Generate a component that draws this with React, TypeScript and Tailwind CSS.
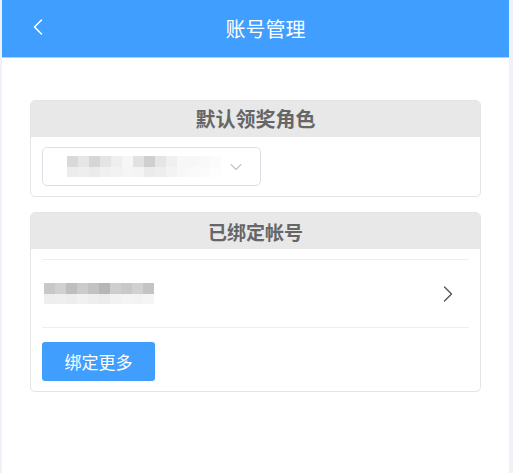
import { ChevronDown, ChevronLeft, ChevronRight } from 'lucide-react';

const FONT = { fontFamily: '"Noto Sans CJK SC", "Noto Sans", sans-serif' };

// blurred (pixelated) placeholder text, drawn as grey cells
const SELECT_TOP = ['#d9d9d9', '#e6e6e6', '#d6d6d6', '#e4e4e4', '#eeeeee', '#f6f6f6', '#e2e2e2', '#cfcfcf', '#e5e5e5', '#f0f0f0', '#f7f7f7', '#f7f7f7', '#f9f9f9', '#fbfbfb'];
const SELECT_BOTTOM = ['#ececec', '#eeeeee', '#ebebeb', '#f0f0f0', '#f2f2f2', '#f5f5f5', '#f4f4f4', '#ebebeb', '#eeeeee', '#f3f3f3', '#f8f8f8', '#fafafa', '#fbfbfb', '#fdfdfd'];
const ROW_TOP = ['#c8c8c8', '#d0d0d0', '#bebebe', '#cbcbcb', '#c2c2c2', '#b6b6b6', '#cecece', '#c8c8c8', '#d1d1d1', '#c4c4c4'];
const ROW_BOTTOM = ['#eeeeee', '#efefef', '#ededed', '#f1f1f1', '#eeeeee', '#ececec', '#f2f2f2', '#f4f4f4', '#f3f3f3', '#f5f5f5'];

function Blur({ top, bottom }: { top: string[]; bottom: string[] }) {
  return (
    <div className="flex flex-col">
      <div className="flex">
        {top.map((c, i) => (
          <div key={i} className="h-[11px] w-[11px]" style={{ backgroundColor: c }} />
        ))}
      </div>
      <div className="flex">
        {bottom.map((c, i) => (
          <div key={i} className="h-[10px] w-[11px]" style={{ backgroundColor: c }} />
        ))}
      </div>
    </div>
  );
}

function Card({ title, size, children }: { title: string; size: string; children: React.ReactNode }) {
  return (
    <div className="overflow-hidden rounded-[5px] border border-[#e4e4e4] bg-white">
      <div className={`flex h-[36px] items-center justify-center bg-[#e8e8e8] font-bold leading-none text-[#666666] ${size}`}>
        {title}
      </div>
      {children}
    </div>
  );
}

export default function App() {
  return (
    <div className="min-h-[473px] bg-[#edf2f9]" style={FONT}>
      <div className="ml-[2px] min-h-[473px] w-[507px] bg-white">
        {/* Header */}
        <div className="relative flex h-[58px] items-center justify-center border-b border-[#a6d2ff] bg-[#409eff]">
          <ChevronLeft className="absolute left-[22px] top-[13px] h-[28px] w-[28px] text-white" strokeWidth={1.3} />
          <span className="ml-[20px] text-[20px] text-white">账号管理</span>
        </div>

        <div className="flex flex-col gap-[15px] px-[28px] pt-[42px]">
          {/* Default reward role */}
          <Card title="默认领奖角色" size="text-[20px]">
            <div className="px-[11px] pb-[10px] pt-[10px]">
              <div className="flex h-[39px] w-[219px] items-center rounded-[5px] border border-[#dcdfe6] pl-[24px] pr-[14px]">
                <Blur top={SELECT_TOP} bottom={SELECT_BOTTOM} />
                <ChevronDown className="ml-auto h-[20px] w-[20px] text-[#c0c4cc]" strokeWidth={1.3} />
              </div>
            </div>
          </Card>

          {/* Bound accounts */}
          <Card title="已绑定帐号" size="text-[19px]">
            <div className="px-[11px] pb-[10px] pt-[10px]">
              <div className="flex h-[69px] items-center border-y border-[#ebeef5] pl-[2px] pr-[7px]">
                <Blur top={ROW_TOP} bottom={ROW_BOTTOM} />
                <ChevronRight className="ml-auto h-[28px] w-[28px] text-[#555555]" strokeWidth={1.2} />
              </div>
              <button className="mt-[14px] flex h-[39px] w-[113px] items-center justify-center rounded-[3px] bg-[#409eff] text-[17px] text-white">
                绑定更多
              </button>
            </div>
          </Card>
        </div>
      </div>
    </div>
  );
}
